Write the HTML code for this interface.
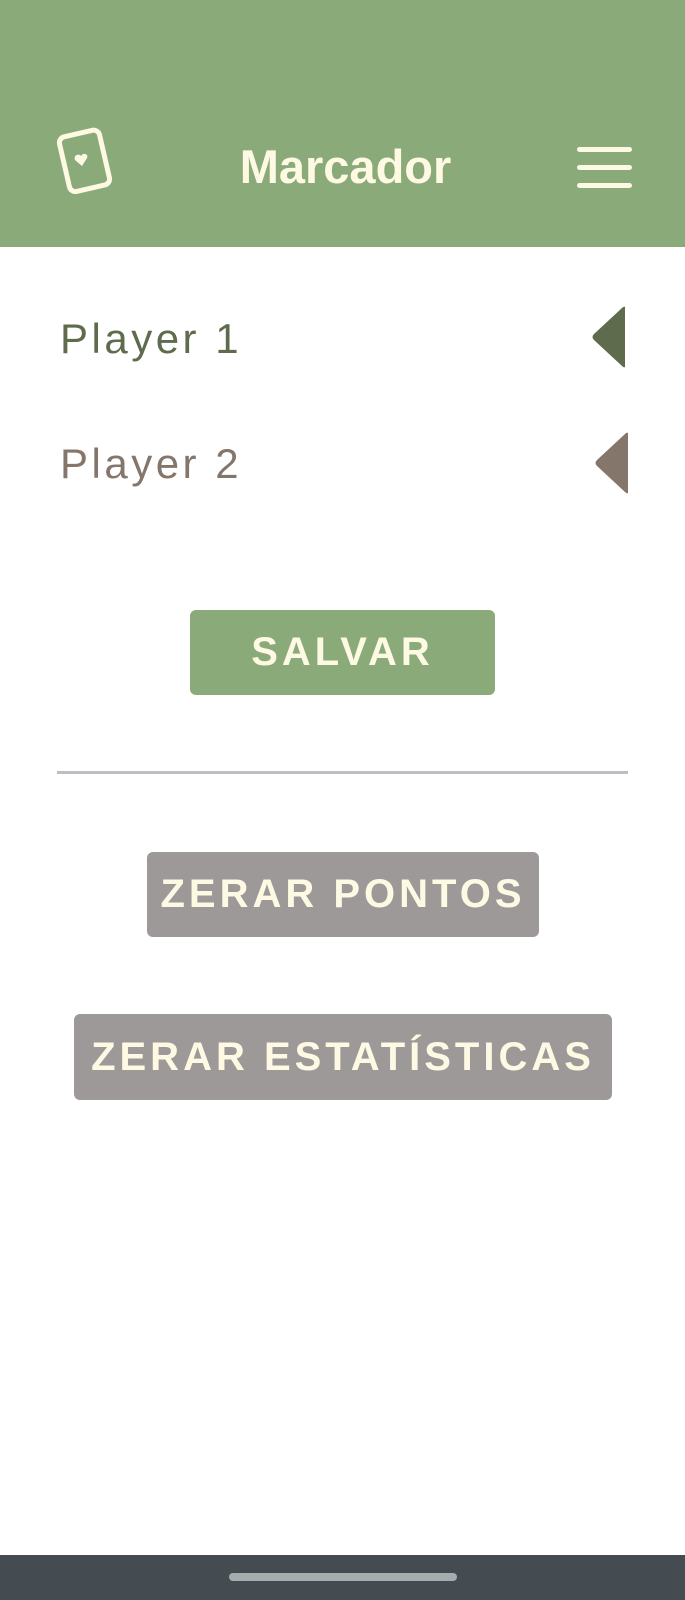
<!DOCTYPE html>
<html><head><meta charset="utf-8"><style>
*{margin:0;padding:0;box-sizing:border-box}
body{width:685px;height:1600px;position:relative;background:#fff;font-family:"Liberation Sans",sans-serif;overflow:hidden}
.hdr{position:absolute;left:0;top:0;width:685px;height:247px;background:#8aaa7a}
.title{position:absolute;left:0;width:685px;top:142px;text-align:center;font-size:47px;font-weight:bold;color:#fdf9e3;line-height:50px;padding-left:6px}
.ham{position:absolute;left:577px;width:55px;height:5px;border-radius:3px;background:#fdf9e3}
.pl{position:absolute;left:60px;font-size:42px;letter-spacing:3.5px;line-height:50px}
.btn{position:absolute;border-radius:6px;color:#fdf9e3;font-weight:bold;font-size:40px;letter-spacing:4px;text-align:center;display:flex;align-items:center;justify-content:center}
</style></head><body>
<div class="hdr">
<svg style="position:absolute;left:54px;top:126px" width="64" height="72" viewBox="0 0 64 72">
<rect x="10" y="7" width="41" height="56" rx="6" transform="rotate(-13 30 35)" fill="none" stroke="#fdf9e3" stroke-width="5"/>
<path d="M27 30c-2-3-8-1-6 4l7 6 5-8c2-4-4-6-6-2z" fill="#fdf9e3"/>
</svg>
<div class="title">Marcador</div>
<div class="ham" style="top:147px"></div>
<div class="ham" style="top:165px"></div>
<div class="ham" style="top:183px"></div>
</div>
<div class="pl" style="top:314px;color:#5e6b4d">Player 1</div>
<svg style="position:absolute;left:589px;top:305px" width="40" height="64"><path d="M36 2 L36 62 Q35 63 33 61 L5 35 Q2 32 5 29 L33 3 Q35 1 36 2z" fill="#5e6b4d"/></svg>
<div class="pl" style="top:439px;color:#85766b">Player 2</div>
<svg style="position:absolute;left:592px;top:431px" width="40" height="64"><path d="M36 2 L36 62 Q35 63 33 61 L5 35 Q2 32 5 29 L33 3 Q35 1 36 2z" fill="#85766b"/></svg>
<div class="btn" style="left:190px;top:610px;width:305px;height:85px;background:#8aaa7a">SALVAR</div>
<div style="position:absolute;left:57px;top:771px;width:571px;height:3px;background:#c0bcc4"></div>
<div class="btn" style="left:147px;top:852px;width:392px;height:85px;background:#9d9999">ZERAR PONTOS</div>
<div class="btn" style="left:74px;top:1014px;width:538px;height:86px;background:#9d9999">ZERAR ESTATÍSTICAS</div>
<div style="position:absolute;left:0;top:1555px;width:685px;height:45px;background:#444c51"></div>
<div style="position:absolute;left:229px;top:1573px;width:228px;height:8px;border-radius:4px;background:#a6abae"></div>
</body></html>
